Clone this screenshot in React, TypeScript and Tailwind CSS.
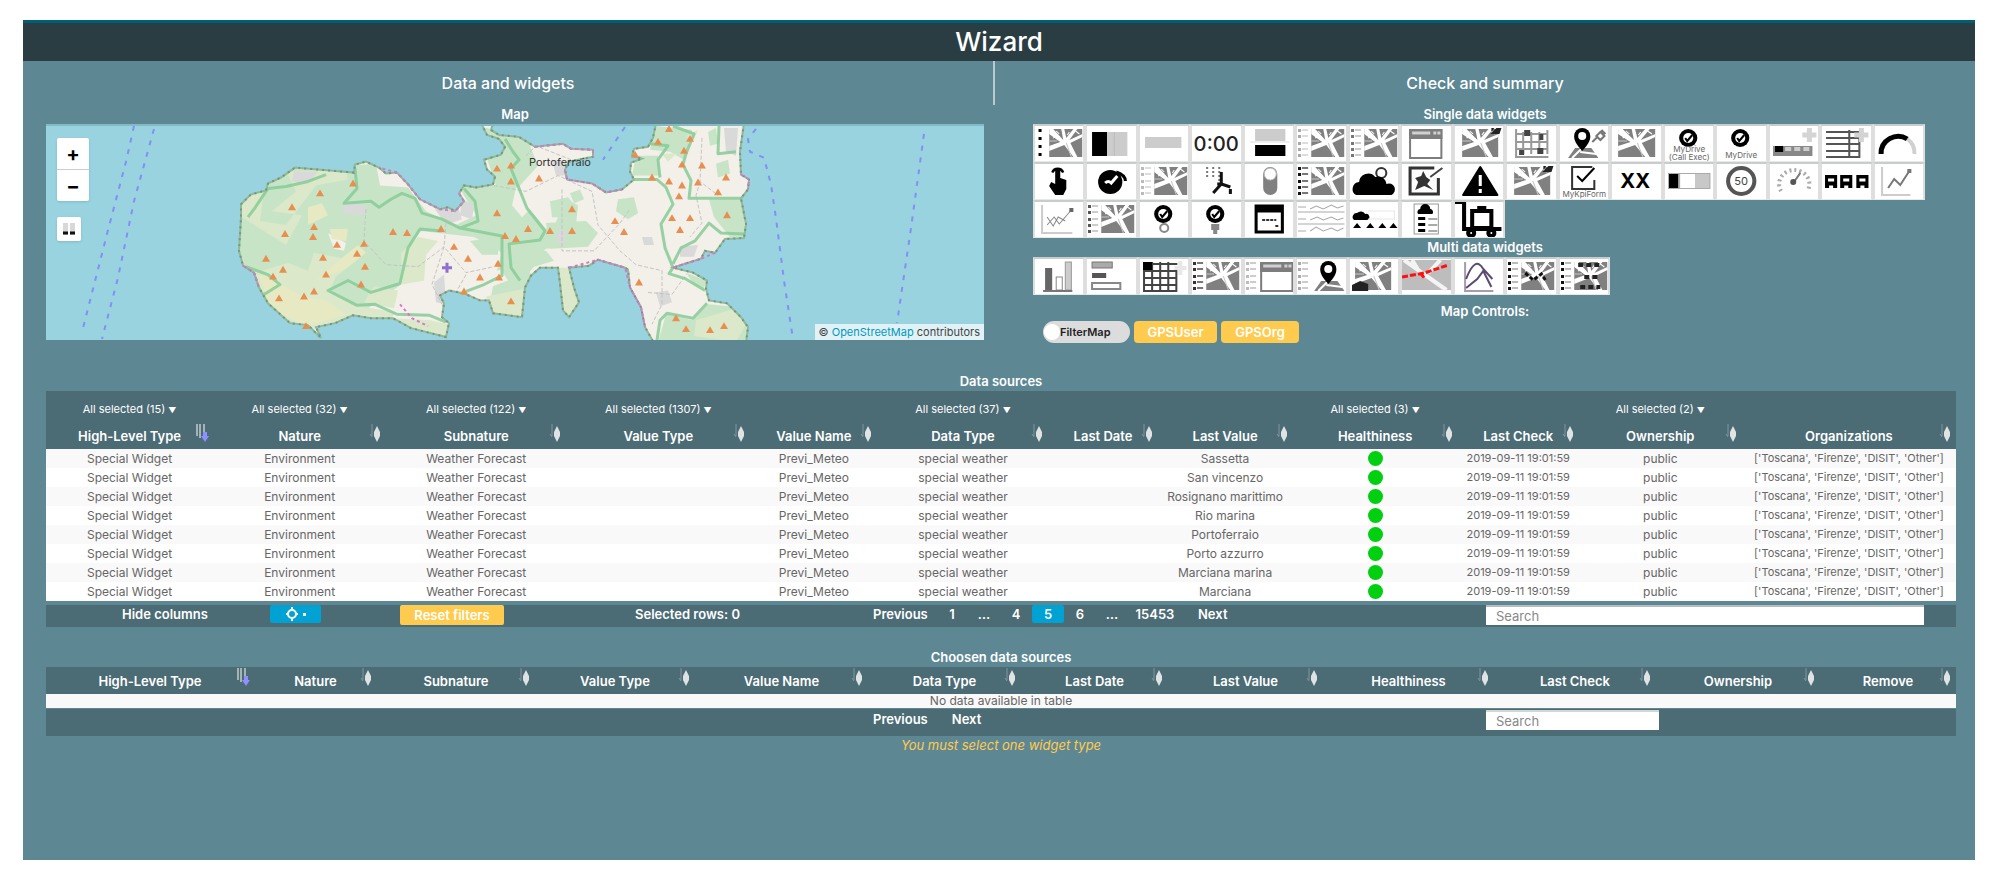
import type { ReactNode } from "react";
import clsx from "clsx";

interface Column {
  label: string;
  width: number;
  filter?: string;
}

const sourceColumns: Column[] = [
  { label: "High-Level Type", width: 167, filter: "All selected (15)" },
  { label: "Nature", width: 173, filter: "All selected (32)" },
  { label: "Subnature", width: 180, filter: "All selected (122)" },
  { label: "Value Type", width: 184, filter: "All selected (1307)" },
  { label: "Value Name", width: 127 },
  { label: "Data Type", width: 171, filter: "All selected (37)" },
  { label: "Last Date", width: 109 },
  { label: "Last Value", width: 135 },
  { label: "Healthiness", width: 165, filter: "All selected (3)" },
  { label: "Last Check", width: 121 },
  { label: "Ownership", width: 163, filter: "All selected (2)" },
  { label: "Organizations", width: 214 },
];

const chosenColumns: Column[] = [
  { label: "High-Level Type", width: 208 },
  { label: "Nature", width: 123 },
  { label: "Subnature", width: 158 },
  { label: "Value Type", width: 160 },
  { label: "Value Name", width: 173 },
  { label: "Data Type", width: 153 },
  { label: "Last Date", width: 147 },
  { label: "Last Value", width: 155 },
  { label: "Healthiness", width: 171 },
  { label: "Last Check", width: 162 },
  { label: "Ownership", width: 164 },
  { label: "Remove", width: 136 },
];

const cities = [
  "Sassetta",
  "San vincenzo",
  "Rosignano marittimo",
  "Rio marina",
  "Portoferraio",
  "Porto azzurro",
  "Marciana marina",
  "Marciana",
];

const peaks = [
  [307, 58], [274, 68], [246, 82], [268, 102], [239, 109], [267, 112], [291, 120], [318, 119],
  [277, 133], [311, 129], [220, 134], [237, 145], [227, 152], [280, 150], [319, 142], [315, 160],
  [268, 167], [258, 172], [233, 174], [260, 202], [347, 107], [361, 108], [395, 104], [408, 122],
  [422, 134], [434, 153], [453, 153], [452, 139], [418, 167], [465, 177], [451, 43], [465, 40],
  [465, 56], [493, 53], [451, 88], [459, 111], [470, 114], [482, 104], [504, 106], [526, 84],
  [526, 106], [569, 96], [578, 107], [593, 158], [623, 3], [612, 16], [644, 13], [638, 25],
  [589, 29], [636, 39], [656, 40], [680, 52], [606, 52], [623, 56], [652, 57], [636, 60],
  [633, 71], [672, 67], [626, 93], [644, 93], [634, 105], [681, 90], [630, 194], [640, 205],
  [664, 206], [678, 202],
];

const coast =
  "M435 -3 L441 9 L453 13 L459 21 L455 29 L438 34 L441 44 L449 51 L447 59 L430 62 L418 60 L413 68 L418 76 L409 86 L402 82 L394 84 L374 74 L362 59 L351 47 L340 48 L333 42 L320 36 L309 39 L308 47 L284 45 L249 42 L235 52 L222 58 L220 65 L205 69 L195 79 L195 93 L193 126 L197 141 L208 148 L213 163 L222 179 L244 199 L262 201 L275 214 L270 203 L289 199 L307 191 L325 194 L347 194 L365 204 L400 213 L403 199 L396 193 L398 179 L394 171 L403 166 L418 169 L434 176 L443 176 L447 189 L476 193 L479 163 L485 151 L494 143 L512 143 L514 159 L517 186 L523 193 L533 178 L528 163 L523 143 L543 141 L552 135 L579 143 L582 145 L584 163 L595 183 L599 203 L608 219 L700 219 L702 203 L695 193 L681 179 L663 176 L660 164 L661 156 L647 148 L627 143 L639 139 L655 134 L659 126 L669 128 L679 114 L698 113 L700 99 L695 73 L702 64 L703 54 L695 49 L694 26 L698 -3 L610 -3 L607 12 L602 21 L588 23 L586 30 L596 33 L585 37 L584 46 L588 54 L576 64 L560 67 L546 58 L521 54 L519 44 L523 36 L547 31 L547 24 L525 23 L517 18 L489 21 L473 11 L453 9 L445 4 L447 -3 Z";

const IslandMap = () => (
  <svg viewBox="0 0 938 216" preserveAspectRatio="none" className="block h-full w-full" aria-hidden="true">
    <defs>
      <clipPath id="island">
        <path d={coast} />
      </clipPath>
    </defs>
    <rect width="938" height="216" fill="#98d3df" />
    <g fill="none" stroke="#8090f4" strokeWidth="2" strokeDasharray="5 7">
      <path d="M88 0 L80 36 L61 109 L36 208" />
      <path d="M108 3 L88 76 L72 153 L56 215" />
      <path d="M579 1 L557 34" />
      <path d="M710 3 L702 13 L704 26 L718 32 L725 59 L730 93 L738 156 L747 215" />
      <path d="M878 8 L865 103 L851 199" />
    </g>
    <path d={coast} fill="#f3efe9" />
    <g clipPath="url(#island)">
      <path fill="#c8e4c7" d="M190 40 L300 40 L330 38 L334 60 L362 62 L380 86 L410 100 L430 90 L412 60 L450 60 L440 30 L430 0 L480 10 L492 40 L474 60 L478 78 L505 108 L520 74 L532 80 L530 100 L548 108 L542 120 L500 124 L480 140 L490 160 L440 200 L448 156 L456 128 L428 112 L375 106 L362 122 L355 160 L300 200 L190 215 Z" />
      <path fill="#f3efe9" d="M470 62 L480 60 L488 84 L504 90 L500 104 L484 84 L476 92 L466 80 Z M432 150 L455 145 L462 156 L425 170 Z M336 46 L345 46 L342 58 L334 60 Z M282 108 L300 118 L298 126 L288 124 Z" />
      <path fill="#dbe8ca" d="M190 70 L218 64 L214 96 L240 100 L270 60 L302 54 L300 44 L240 46 L250 66 L226 86 L256 90 L240 120 L196 92 Z M194 140 L216 146 L242 138 L262 146 L268 128 L310 136 L290 152 L284 166 L312 182 L350 188 L340 200 L262 205 L220 184 Z M355 128 L372 112 L392 116 L380 130 L378 156 L356 160 Z M345 194 L384 196 L402 200 L402 214 L372 210 Z M440 172 L480 164 L478 194 L446 192 Z M512 143 L524 143 L534 178 L524 194 L516 190 Z M328 162 L352 166 L348 184 L318 178 Z" />
      <path fill="#e6e9c2" d="M212 150 L232 158 L256 172 L280 176 L300 190 L262 202 L226 186 Z M284 104 L302 104 L300 116 L286 114 Z M290 138 L312 120 L320 128 L300 144 L270 156 Z M262 82 L276 78 L282 90 L262 100 Z" />
      <path fill="#c8e4c7" d="M424 116 L452 112 L452 130 L436 130 Z M504 76 L522 72 L532 84 L522 92 L506 92 Z M500 98 L540 96 L552 108 L542 122 L504 124 Z M572 74 L588 72 L592 88 L582 94 L570 86 Z M610 0 L646 4 L638 34 L624 26 L604 24 Z M590 30 L612 30 L614 50 L586 50 Z M663 74 L696 74 L700 112 L684 112 L668 92 Z M670 38 L682 34 L684 48 L672 52 Z M640 148 L660 156 L658 164 L648 160 Z M620 190 L646 196 L662 180 L684 182 L700 200 L702 218 L612 218 Z M524 68 L534 64 L538 74 L528 78 Z M466 128 L500 126 L508 136 L488 142 L476 156 L466 150 Z M662 6 L670 2 L672 18 L664 20 Z" />
      <path fill="#dbe8ca" d="M650 196 L690 184 L700 200 L690 218 L648 212 Z M640 10 L652 4 L648 14 Z M616 28 L630 28 L622 36 Z" />
      <path fill="#d9d9d9" d="M389 84 L412 82 L416 94 L400 100 Z M416 74 L428 80 L426 94 L414 90 Z M506 34 L520 36 L522 50 L510 50 Z M596 112 L606 112 L608 120 L598 120 Z M678 2 L692 2 L690 30 L680 26 Z M634 122 L652 120 L648 132 L634 132 Z M388 158 L398 150 L400 180 L390 178 Z M248 46 L272 46 L262 58 L246 56 Z M610 168 L622 166 L626 178 L614 182 Z M300 76 L322 82 L318 90 L296 88 Z M512 104 L520 106 L518 120 L510 116 Z" />
      <g fill="none" stroke="#c4c4c4" strokeWidth="1" strokeDasharray="4 2">
        <path d="M320 84 L318 116 L340 140 L372 142 L398 122 L420 148 L448 142" />
        <path d="M400 98 L398 122 L386 160 L396 180" />
        <path d="M448 60 L480 66 L512 50 L546 66 L552 100 L574 126 L590 140 L616 146 L616 180 L606 200" />
        <path d="M516 64 L516 126 L548 126 L574 98 L584 84" />
        <path d="M656 12 L654 56 L672 70 M654 56 L650 70 L656 98 L644 112" />
        <path d="M480 30 L490 20 L540 40 M420 150 L410 168 M602 168 L626 170 L640 150" />
      </g>
      <g fill="none" stroke="#86cc97" strokeWidth="3" strokeLinejoin="round" opacity="0.85">
        <path d="M202 92 L208 84 L222 63 L240 61 L262 56 L280 49" />
        <path d="M309 43 L311 63 L298 78 L325 76 L333 82 L345 74 L356 68 L369 73 L376 88 L396 94 L414 103 L432 96 L429 76 L418 63" />
        <path d="M396 106 L374 104 L362 123 L354 159 L325 168 L302 156 L282 166 L311 181 L329 180 L351 190 L383 191 L400 198" />
        <path d="M414 103 L456 111 L456 151 L438 160 L420 167" />
        <path d="M459 13 L467 26 L473 34 L465 43 L473 63 L481 83 L499 106 L494 115 L463 119 L465 143 L474 156" />
        <path d="M588 54 L611 54 L620 62 L627 79 L615 99 L619 123 L627 143 L623 149 L639 154 L659 166" />
        <path d="M627 0 L648 8 L640 28 L637 39 L645 55 L643 73 L695 73" />
        <path d="M627 139 L635 123 L649 116 L663 98 L675 108 L698 109" />
        <path d="M611 216 L614 196 L621 189 L647 194 L661 179" />
        <path d="M673 0 L672 28 L690 26" />
        <path d="M200 142 L222 150 L234 160 L218 170" />
        <path d="M604 18 L622 20 L612 34 L614 52" />
      </g>
    </g>
    <path d={coast} fill="none" stroke="#86c08f" strokeWidth="2" />
    <path d={coast} fill="none" stroke="#8c8798" strokeWidth="2" strokeDasharray="2 4" />
    <g fill="none" stroke="#d678cf" strokeWidth="2" strokeDasharray="3 3">
      <path d="M413 68 L418 76 L409 86 L394 84 L374 74 L362 59 L351 47 L333 42" />
      <path d="M489 21 L517 18 L525 23 L547 24 L547 31" />
      <path d="M519 44 L521 54 L546 58 L560 67 L576 64" />
      <path d="M523 143 L552 135 L579 143 L584 163 L595 183 L599 203" />
      <path d="M695 49 L703 54 L702 64 M627 143 L655 134 L669 128" />
      <path d="M197 141 L208 148 L213 163 M354 180 L366 194 L382 202" />
    </g>
    {peaks.map(([x, y]) => (
      <path key={`${x}-${y}`} d={`M${x} ${y - 4} l4 7 h-8 z`} fill="#e88f4f" />
    ))}
    <path d="M401 138 v10 M396 143 h10" stroke="#8f6fd0" strokeWidth="3" />
    <text x="483" y="40" fontSize="11" fill="#333333">
      Portoferraio
    </text>
  </svg>
);

/* widget icons, all drawn on a 52 x 38 tile */

const Terrain = ({ x = 16, w = 33 }: { x?: number; w?: number }) => (
  <svg x={x} y="5" width={w} height="28" viewBox="0 0 33 28" preserveAspectRatio="none">
    <rect width="33" height="28" fill="#808080" />
    <path
      d="M0 0 L4 0 L14 11 L12 0 L15 0 L17 9 L24 0 L28 0 L20 11 L33 5 L33 8 L21 14 L28 28 L24 28 L15 16 L0 22 L0 17 L11 13 L0 5 Z"
      fill="#ffffff"
    />
    <path d="M4 9 L8 7 M26 2 l4 3 M7 2 l3 3 M20 3 l-2 3" stroke="#ffffff" strokeWidth="1" />
    <path d="M17 14 L22 28 M0 12 h8" stroke="#c8c8c8" strokeWidth="1" />
  </svg>
);

const Legend = ({ dots = "#555555", bars = "#d5d5d5" }: { dots?: string; bars?: string }) => (
  <g>
    {[6, 12, 19, 25, 31].map((y) => (
      <g key={y}>
        <rect x="3" y={y - 1} width="3" height="3" fill={dots} />
        <rect x="7" y={y - 1} width="6" height="2" fill={bars} />
      </g>
    ))}
  </g>
);

const Check = () => (
  <g>
    <circle cx="25" cy="14" r="9" />
    <circle cx="25" cy="14" r="5" fill="#ffffff" />
    <path d="M22 14 l2 3 l5 -6" stroke="#000000" strokeWidth="2" fill="none" />
  </g>
);

const Pin = () => (
  <g>
    <path d="M10 34 L17 24 L33 24 L40 34 Z" fill="#808080" />
    <path d="M14 34 L24 24 M22 28 L38 30" stroke="#ffffff" strokeWidth="2" />
    <path d="M24 27 C18 20 16 17 16 12 a8 8 0 0 1 16 0 C32 17 30 20 24 27 Z" />
    <circle cx="24" cy="12" r="4" fill="#ffffff" />
  </g>
);

const Corner = () => <path d="M37 10 L43 4 L48 4 L46 10 Z M38 4 l3 0 l-3 4 z" fill="#222222" />;

const Plus = () => <path d="M41 4 v14 M34 11 h14" stroke="#d4d4d4" strokeWidth="5" />;

const Browser = ({ x = 9, color = "#7d7d7d" }: { x?: number; color?: string }) => (
  <g>
    <rect x={x + 1} y="6" width="31" height="28" fill="#ffffff" stroke={color} strokeWidth="2" />
    <rect x={x} y="5" width="33" height="10" fill={color} />
    <path d={`M${x + 3} 9 h18 M${x + 24} 9 h3 M${x + 28} 9 h3`} stroke="#d0d0d0" strokeWidth="3" />
  </g>
);

const Caption = ({ y, children }: { y: number; children: ReactNode }) => (
  <text x="26" y={y} textAnchor="middle" fontSize="8" fill="#666666">
    {children}
  </text>
);

const legendMap = (dots: string, bars: string) => (
  <>
    <Legend dots={dots} bars={bars} />
    <Terrain />
  </>
);

const singleWidgets: [string, ReactNode][] = [
  ["Selector", <><path d="M7 5 v30" stroke="#000000" strokeWidth="3" strokeDasharray="3 5" /><Terrain /></>],
  ["Bar content", <><rect x="7" y="8" width="15" height="24" /><rect x="22" y="8" width="20" height="24" fill="#cccccc" /><path d="M29 8 v24" stroke="#bcbcbc" /></>],
  ["Color", <rect x="7" y="13" width="36" height="11" fill="#cccccc" />],
  ["Clock", <text x="26" y="27" textAnchor="middle" fontSize="20" fontWeight="500" fill="#222222">0:00</text>],
  ["Column", <><rect x="12" y="5" width="30" height="12" fill="#cccccc" /><path d="M7 18 h39" stroke="#dddddd" /><rect x="12" y="21" width="30" height="11" /></>],
  ["Map selector", legendMap("#aaaaaa", "#dddddd")],
  ["Web selector", legendMap("#777777", "#cccccc")],
  ["External content", <Browser />],
  ["Target map", <><Terrain x={9} w={36} /><Corner /></>],
  ["Calendar", <><path d="M11 5 v28 h32 M18 8 v22 M26 8 v22 M34 8 v22 M42 6 v24 M12 10 h30 M12 18 h30 M12 25 h30" stroke="#999999" strokeWidth="2" fill="none" /><path d="M19 6 h6 v6 h-6 z M34 10 h4 v6 h-4 z M14 26 h5 v5 h-5 z M32 24 h6 v6 h-6 z" fill="#444444" /></>],
  ["Tracker", <><Pin /><path d="M34 18 l5 -5 M38 12 l4 4 l4 -4 l-4 -4 z M43 6 l4 4" stroke="#777777" strokeWidth="2" fill="none" /></>],
  ["Map", <Terrain x={8} w={37} />],
  ["Call", <><Check /><Caption y={28}>MyDrive</Caption><Caption y={36}>(Call Exec)</Caption></>],
  ["Drive", <><Check /><Caption y={34}>MyDrive</Caption></>],
  ["Range", <><rect x="5" y="22" width="39" height="10" fill="#888888" /><rect x="7" y="22" width="8" height="6" /><path d="M17 25 h6 M26 25 h6 M35 25 h6" stroke="#cccccc" strokeWidth="4" /><Plus /></>],
  ["Table", <><path d="M6 8 h34 M6 14 h34 M6 20 h34 M6 27 h34 M6 33 h34 M29 6 v28 M39 12 v22" stroke="#555555" strokeWidth="2" /><Plus /></>],
  ["Gauge", <><path d="M8 30 a17 17 0 0 1 26 -15" fill="none" stroke="#000000" strokeWidth="5" /><path d="M34 15 a17 17 0 0 1 7 15" fill="none" stroke="#d0d0d0" strokeWidth="4" /></>],
  ["Button", <path d="M18 20 l4 2 V8 a3 3 0 0 1 5 0 v8 l6 2 v9 l-3 6 h-8 l-6 -9 z M18 10 a7 7 0 0 1 13 0 l-2 1 a5 5 0 0 0 -9 0 z" />],
  ["Knob", <><circle cx="25" cy="20" r="12" /><path d="M31 10 q9 3 9 9" stroke="#000000" strokeWidth="3" fill="none" /><path d="M20 21 q3 -3 6 0 l6 -7" stroke="#ffffff" strokeWidth="3" fill="none" /></>],
  ["Events", legendMap("#bbbbbb", "#dddddd")],
  ["Network", <><path d="M17 5 v12 M23 5 v12 M29 5 v20" stroke="#777777" strokeWidth="2" strokeDasharray="2 2" /><path d="M31 10 v12 l-8 9 M31 22 l9 3 M40 27 v5 M31 22 h-4" stroke="#111111" strokeWidth="3" fill="none" /></>],
  ["Switch", <><rect x="20" y="5" width="14" height="28" rx="7" fill="#808080" /><circle cx="27" cy="12" r="6" fill="#ffffff" stroke="#bbbbbb" /></>],
  ["Parking", legendMap("#111111", "#777777")],
  ["Weather", <><circle cx="33" cy="11" r="5" fill="none" stroke="#333333" strokeWidth="2" /><path d="M8 33 a7 7 0 0 1 3 -13 a9 9 0 0 1 16 -5 a8 8 0 0 1 11 7 a6 6 0 0 1 5 11 Z" /></>],
  ["Picture", <><path d="M34 6 H10 V32 H38 V16" fill="none" stroke="#333333" strokeWidth="3" /><path d="M15 28 l3 -8 l-3 -4 l6 -2 l2 -5 l3 6 l4 3 l-3 4 l6 6 l-9 -4 z" fill="#333333" /><path d="M30 15 l12 -9" stroke="#444444" strokeWidth="2" /></>],
  ["Alarm", <><path d="M27 5 L44 33 H10 Z" strokeLinejoin="round" stroke="#000000" strokeWidth="2" /><path d="M27 13 v11 M27 27 v4" stroke="#ffffff" strokeWidth="3" /></>],
  ["Traffic", <><Terrain x={9} w={36} /><Corner /></>],
  ["Survey", <><path d="M34 5 H14 V27 H36 V18" fill="none" stroke="#333333" strokeWidth="2" /><path d="M19 14 l5 5 l12 -13" fill="none" stroke="#000000" strokeWidth="2" /><Caption y={35}>MyKpiForm</Caption></>],
  ["Value", <text x="25" y="26" textAnchor="middle" fontSize="20" fontWeight="700">XX</text>],
  ["Progress", <><rect x="5" y="11" width="42" height="16" fill="#aaaaaa" /><rect x="6" y="12" width="9" height="14" /><rect x="17" y="12" width="15" height="14" fill="#ffffff" /><rect x="32" y="12" width="14" height="14" fill="#c8c8c8" /></>],
  ["Speed", <><circle cx="26" cy="19" r="13" fill="#ffffff" stroke="#555555" strokeWidth="4" /><text x="26" y="23" textAnchor="middle" fontSize="11" fill="#444444">50</text></>],
  ["Speedometer", <><path d="M13 29 a15 14 0 1 1 26 0" fill="none" stroke="#aaaaaa" strokeWidth="4" strokeDasharray="2 3" /><path d="M25 21 l7 -10" stroke="#777777" strokeWidth="2" /><circle cx="25" cy="20" r="3" fill="#555555" /></>],
  ["Trains", <><path d="M5 13 h12 v13 h-12 z M20 13 h12 v13 h-12 z M36 13 h12 v13 h-12 z" /><path d="M8 18 h6 M23 18 h6 M39 18 h6 M9 25 h4 M24 25 h4 M40 25 h4" stroke="#ffffff" strokeWidth="3" /></>],
  ["Trend", <><path d="M9 5 v28 h28" fill="none" stroke="#cccccc" strokeWidth="2" /><path d="M15 26 l6 -9 l6 6 l9 -14" fill="none" stroke="#777777" strokeWidth="2" /><rect x="34" y="7" width="4" height="4" fill="#777777" /></>],
  ["Time trend", <><path d="M9 5 v28 h30" fill="none" stroke="#cccccc" strokeWidth="2" /><path d="M14 25 l7 -8 l5 7 l12 -14 M14 17 l6 9 l5 -9 l7 4" fill="none" stroke="#888888" strokeWidth="1" /><rect x="36" y="8" width="4" height="4" fill="#666666" /></>],
  ["Resources", legendMap("#555555", "#cccccc")],
  ["Check pin", <><Check /><circle cx="26" cy="28" r="4" fill="none" stroke="#888888" strokeWidth="2" /></>],
  ["Pin", <><Check /><path d="M21 24 h8 v6 h-2 v4 h-4 v-4 h-2 z" fill="#888888" /></>],
  ["Page", <><rect x="13" y="6" width="26" height="26" fill="#ffffff" stroke="#000000" strokeWidth="3" /><path d="M13 9 h26" stroke="#000000" strokeWidth="7" /><path d="M19 20 h14 M32 26 h4" stroke="#333333" strokeWidth="2" strokeDasharray="3 1" /></>],
  ["Waves", <path d="M3 7 h8 M15 9 l6 -3 l7 3 l8 -4 l6 3 l6 -2 M3 19 h8 M15 20 l7 -3 l6 3 l8 -3 l6 3 l6 -2 M3 31 h8 M15 31 l6 -4 l7 4 l8 -3 l6 3 l6 -3 M3 12 h46 M3 24 h46" fill="none" stroke="#aaaaaa" strokeWidth="1" />],
  ["Forecast row", <><path d="M6 20 a4 4 0 0 1 3 -7 a5 5 0 0 1 8 1 a3 3 0 0 1 2 6 Z" /><path d="M5 28 h8 l-4 -5 z M18 28 h8 l-4 -5 z M30 28 h8 l-4 -5 z M41 28 h8 l-4 -5 z" /><path d="M20 11 h26 v8 h-26" fill="none" stroke="#e8e8e8" /></>],
  ["Forecast column", <><path d="M14 4 h24 v30 h-24 z" fill="none" stroke="#999999" /><path d="M18 14 a3 3 0 0 1 2 -5 a5 5 0 0 1 10 0 a3 3 0 0 1 2 5 z M18 17 h7 v3 h-7 z M18 23 h7 v3 h-7 z M18 29 h7 v3 h-7 z" /><path d="M28 19 h9 M28 25 h9 M28 31 h9" stroke="#aaaaaa" strokeWidth="2" /></>],
  ["Delivery", <><path d="M2 2 H11 V29 H48" fill="none" stroke="#000000" strokeWidth="4" /><rect x="19" y="11" width="19" height="17" fill="#ffffff" stroke="#000000" strokeWidth="4" /><path d="M24 6 h9 v5 h-9 z" /><circle cx="18" cy="33" r="3" fill="#ffffff" stroke="#000000" strokeWidth="4" /><circle cx="38" cy="33" r="3" fill="#ffffff" stroke="#000000" strokeWidth="4" /></>],
];

const multiWidgets: [string, ReactNode][] = [
  ["Bar series", <><rect x="12" y="11" width="7" height="22" fill="#666666" /><rect x="23" y="20" width="6" height="13" fill="#ffffff" stroke="#888888" /><rect x="32" y="5" width="6" height="28" fill="#cccccc" stroke="#999999" /><path d="M10 34 h29" stroke="#777777" strokeWidth="2" /></>],
  ["Stacked bars", <><rect x="7" y="5" width="20" height="6" fill="#aaaaaa" stroke="#777777" /><rect x="7" y="16" width="14" height="5" fill="#555555" /><rect x="7" y="26" width="28" height="6" fill="#ffffff" stroke="#888888" strokeWidth="2" /></>],
  ["Data table", <><path d="M5 7 h34 M5 14 h34 M5 21 h34 M5 28 h34 M5 34 h34 M6 5 v29 M14 5 v29 M22 5 v29 M30 5 v29 M38 14 v20" stroke="#444444" strokeWidth="2" /><rect x="5" y="5" width="9" height="8" /><path d="M42 4 v14 M36 11 h12" stroke="#e8e8e8" strokeWidth="4" /></>],
  ["Multi map", legendMap("#333333", "#777777")],
  ["Multi content", <><Legend dots="#bbbbbb" bars="#cccccc" /><Browser x={17} /></>],
  ["Multi tracker", <><Legend dots="#aaaaaa" bars="#cccccc" /><g transform="translate(9)"><Pin /></g></>],
  ["Area map", <><Terrain x={7} w={36} /><path d="M4 34 v-6 l8 -4 l8 3 v7 z" fill="#222222" /></>],
  ["Route map", <><rect x="1" y="3" width="50" height="30" fill="#bdbdbd" /><path d="M4 3 L46 33 M20 16 L12 3 M28 16 L40 3" stroke="#f4f4f4" strokeWidth="4" /><path d="M2 20 L24 16 L48 8 M20 16 l5 6" fill="none" stroke="#ff1010" strokeWidth="3" strokeDasharray="6 2" /></>],
  ["Curves", <><path d="M12 5 v29 h28" fill="none" stroke="#a79bb0" strokeWidth="2" /><path d="M13 22 q9 -24 17 -10 l9 10 M13 31 l11 -9 l6 -8 l8 16" fill="none" stroke="#5c4a72" strokeWidth="2" /></>],
  ["Flow map", <>{legendMap("#111111", "#bbbbbb")}<path d="M20 16 l8 7 l8 -6 l4 6" fill="none" stroke="#111111" strokeWidth="3" strokeDasharray="4 2" /></>],
  ["Dense map", <>{legendMap("#111111", "#bbbbbb")}<path d="M20 8 h24 M26 20 h16 M22 30 h20" stroke="#222222" strokeWidth="4" strokeDasharray="5 3" /></>],
];

const WidgetGrid = ({ widgets }: { widgets: [string, ReactNode][] }) => (
  <div className="grid grid-cols-17 pl-[38px] pr-[50px]">
    {widgets.map(([name, icon]) => (
      <button
        key={name}
        type="button"
        aria-label={name}
        className="h-[38px] border-x-2 border-t-2 border-b border-x-[#dedede] border-t-[#c9cccd] border-b-[#e8e8e8] bg-white"
      >
        <svg viewBox="2 2 48 35" preserveAspectRatio="none" className="h-full w-full">
          {icon}
        </svg>
      </button>
    ))}
  </div>
);

const SortIcon = ({ active }: { active: boolean }) => (
  <svg viewBox="0 0 14 20" className="h-5 w-[14px] shrink-0" aria-hidden="true">
    {active ? (
      <>
        <path d="M2 1 v12 M5 1 v14 M9 1 v9" stroke="#a3b3b8" strokeWidth="2" />
        <path d="M8 9 h4 v4 h2 l-4 6 l-4 -6 h2 z" fill="#8f8fff" />
      </>
    ) : (
      <>
        <path d="M4 1 v12 M2 11 l2 3" stroke="#82979e" strokeWidth="1" fill="none" />
        <path d="M9 3 l3 6 v4 l-3 6 l-3 -6 v-4 z" fill="#dfe3e4" />
      </>
    )}
  </svg>
);

const ColumnGroup = ({ columns }: { columns: Column[] }) => {
  const total = columns.reduce((sum, column) => sum + column.width, 0);

  return (
    <colgroup>
      {columns.map((column) => (
        <col key={column.label} style={{ width: `${(column.width / total) * 100}%` }} />
      ))}
    </colgroup>
  );
};

const HeaderCells = ({ columns }: { columns: Column[] }) => (
  <>
    {columns.map((column, i) => (
      <th key={column.label} scope="col" className="relative p-0 text-[13px] leading-5 font-semibold">
        {column.label}
        <span className="absolute top-0 right-1">
          <SortIcon active={i === 0} />
        </span>
      </th>
    ))}
  </>
);

const PageButton = ({ className, children }: { className?: string; children: ReactNode }) => (
  <button type="button" className={clsx("h-[18px] shrink-0 leading-[18px]", className)}>
    {children}
  </button>
);

const SectionTitle = ({ children }: { children: ReactNode }) => (
  <h3 className="h-[19px] text-center text-[13px] leading-[19px] font-semibold">{children}</h3>
);

const App = () => {
  return (
    <div className="flex min-h-screen flex-col bg-white pt-5 pr-[26px] pb-6 pl-[23px] font-['Inter','Noto_Sans',sans-serif]">
      <main className="flex-1 bg-[#5e8794] text-white">
        <h1 className="h-[41px] border-t-3 border-[#006073] bg-[#293d42] text-center text-[26px] leading-[38px] font-medium">
          Wizard
        </h1>

        <div className="grid grid-cols-[972fr_980fr]">
          <h2 className="h-11 border-r-2 border-[#bcc9ce] text-center text-base leading-[44px] font-medium">
            Data and widgets
          </h2>
          <h2 className="h-11 text-center text-base leading-[44px] font-medium">Check and summary</h2>
        </div>

        <div className="grid grid-cols-[972fr_980fr]">
          <section className="pr-[11px] pl-[23px]">
            <SectionTitle>Map</SectionTitle>
            <div className="relative h-[216px] border-t-2 border-[#84bac6]">
              <IslandMap />
              <div className="absolute top-3 left-[11px] w-8 rounded-xs bg-white text-black shadow-sm">
                <button type="button" aria-label="Zoom in" className="block h-8 w-full border-b border-[#cccccc] text-xl leading-7 font-bold">
                  +
                </button>
                <button type="button" aria-label="Zoom out" className="block h-[31px] w-full text-xl leading-7 font-bold">
                  −
                </button>
              </div>
              <button type="button" aria-label="Select area" className="absolute top-[91px] left-[11px] flex h-6 w-6 items-center justify-center rounded-xs bg-white shadow-sm">
                <svg viewBox="0 0 14 12" className="h-3 w-[14px]">
                  <path d="M1 0 h5 v12 h-5 z M8 0 h5 v12 h-5 z" fill="#d8d8d8" />
                  <path d="M1 10 h5 M8 10 h5" stroke="#111111" strokeWidth="3" />
                </svg>
              </button>
              <p className="absolute right-0 bottom-0 h-4 bg-white/70 px-1 text-[11px] leading-4 text-[#444444]">
                ©{" "}
                <a href="#osm" className="text-[#0098c0]">
                  OpenStreetMap
                </a>{" "}
                contributors
              </p>
            </div>
          </section>

          <section>
            <SectionTitle>Single data widgets</SectionTitle>
            <WidgetGrid widgets={singleWidgets} />
            <SectionTitle>Multi data widgets</SectionTitle>
            <WidgetGrid widgets={multiWidgets} />
            <div className="pt-[7px]">
              <SectionTitle>Map Controls:</SectionTitle>
            </div>
            <div className="flex gap-1 pl-12 text-[13px] leading-[22px] font-semibold">
              <button type="button" className="flex h-[22px] w-[87px] items-center rounded-full bg-[#dcdcdc] pl-px text-[11px] text-[#222222]">
                <span className="size-4 shrink-0 rounded-full bg-white" />
                FilterMap
              </button>
              <button type="button" className="h-[22px] w-[83px] rounded-sm bg-[#ffcb4f]">
                GPSUser
              </button>
              <button type="button" className="h-[22px] w-[78px] rounded-sm bg-[#ffcb4f]">
                GPSOrg
              </button>
            </div>
          </section>
        </div>

        <section className="pt-[29px] pr-[19px] pl-[23px]">
          <SectionTitle>Data sources</SectionTitle>
          <table className="w-full table-fixed border-collapse text-center">
            <ColumnGroup columns={sourceColumns} />
            <thead className="bg-[#4b6b75]">
              <tr className="h-8">
                {sourceColumns.map((column) => (
                  <td key={column.label} className="p-0 pt-1 text-[11px] leading-4">
                    {column.filter && (
                      <button type="button">
                        {column.filter} <span className="text-[8px]">▼</span>
                      </button>
                    )}
                  </td>
                ))}
              </tr>
              <tr className="h-[26px]">
                <HeaderCells columns={sourceColumns} />
              </tr>
            </thead>
            <tbody className="text-xs leading-[19px] text-[#666666]">
              {cities.map((city) => (
                <tr key={city} className="h-[19px] bg-white whitespace-nowrap odd:bg-[#f9f9f9]">
                  <td className="p-0">Special Widget</td>
                  <td className="p-0">Environment</td>
                  <td className="p-0">Weather Forecast</td>
                  <td className="p-0" />
                  <td className="p-0">Previ_Meteo</td>
                  <td className="p-0">special weather</td>
                  <td className="p-0" />
                  <td className="p-0">{city}</td>
                  <td className="p-0">
                    <span className="mx-auto block size-[15px] rounded-full bg-[#00d010]" />
                  </td>
                  <td className="p-0 text-[11px]">2019-09-11 19:01:59</td>
                  <td className="p-0">public</td>
                  <td className="p-0 text-[11px]">['Toscana', 'Firenze', 'DISIT', 'Other']</td>
                </tr>
              ))}
            </tbody>
          </table>

          <div className="mt-1 grid h-[22px] grid-cols-[148fr_130fr_235fr_238fr_613fr_470fr] items-start bg-[#4b6b75] pl-[76px] text-[13px] leading-[18px] font-semibold">
            <span>Hide columns</span>
            <button type="button" aria-label="Columns" className="flex h-[18px] w-[51px] items-center justify-center gap-1 rounded-xs bg-[#00a2d3]">
              <svg viewBox="0 0 14 14" className="size-[14px]">
                <circle cx="7" cy="7" r="4" fill="none" stroke="#ffffff" strokeWidth="2" />
                <path d="M7 0 v3 M7 11 v3 M1 7 h2 M11 7 h2" stroke="#ffffff" strokeWidth="2" />
              </svg>
              <span className="size-[3px] bg-white" />
            </button>
            <button type="button" className="h-5 w-[104px] rounded-xs bg-[#ffcb4f] leading-5">
              Reset filters
            </button>
            <span>Selected rows: 0</span>
            <nav className="flex" aria-label="Data sources pages">
              <PageButton className="w-[63px] text-left">Previous</PageButton>
              <PageButton className="w-8">1</PageButton>
              <span className="w-8 text-center">…</span>
              <PageButton className="w-8">4</PageButton>
              <PageButton className="w-8 rounded-xs bg-[#00a2d3]">5</PageButton>
              <PageButton className="w-8">6</PageButton>
              <span className="w-8 text-center">…</span>
              <PageButton className="w-[54px]">15453</PageButton>
              <PageButton className="ml-4">Next</PageButton>
            </nav>
            <input
              type="search"
              aria-label="Search data sources"
              placeholder="Search"
              className="h-5 w-[438px] border-t-2 border-[#b5bcbf] bg-white px-[10px] font-normal text-[#444444] placeholder:text-[#888888]"
            />
          </div>
        </section>

        <section className="pt-[21px] pr-[19px] pl-[23px]">
          <SectionTitle>Choosen data sources</SectionTitle>
          <table className="w-full table-fixed border-collapse text-center">
            <ColumnGroup columns={chosenColumns} />
            <thead className="bg-[#4b6b75]">
              <tr className="h-[27px]">
                <HeaderCells columns={chosenColumns} />
              </tr>
            </thead>
            <tbody>
              <tr className="h-[14px] bg-[#f9f9f9] text-xs leading-[14px] text-[#666666]">
                <td colSpan={12} className="p-0">
                  No data available in table
                </td>
              </tr>
            </tbody>
          </table>

          <div className="mt-px grid h-[27px] grid-cols-[751fr_613fr_470fr] items-start bg-[#4b6b75] pt-px pl-[76px] text-[13px] leading-5 font-semibold">
            <span />
            <nav className="flex gap-6" aria-label="Choosen data sources pages">
              <PageButton>Previous</PageButton>
              <PageButton>Next</PageButton>
            </nav>
            <input
              type="search"
              aria-label="Search choosen data sources"
              placeholder="Search"
              className="h-5 w-[173px] border-t-2 border-[#d3d6d7] bg-white px-[10px] font-normal text-[#444444] placeholder:text-[#888888]"
            />
          </div>
          <p className="text-center text-[13px] leading-[19px] text-[#ffcb4f] italic">You must select one widget type</p>
        </section>
      </main>
    </div>
  );
};

export default App;
